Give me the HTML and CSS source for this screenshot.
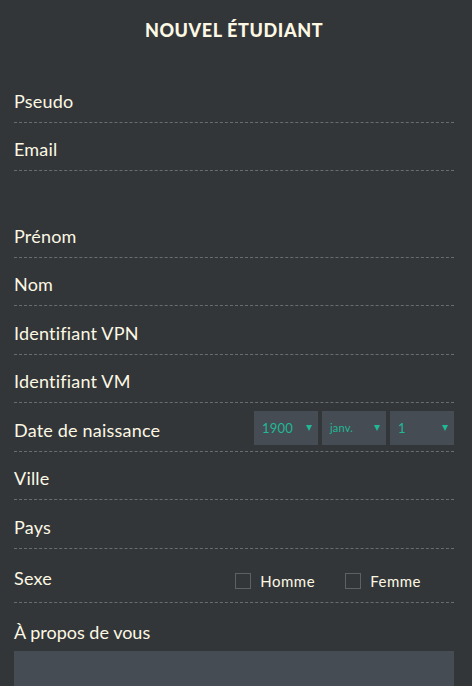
FILE: index.html
```html
<!DOCTYPE html>
<html lang="fr">
<head>
  <meta charset="UTF-8" />
  <title>Nouvel étudiant</title>
  <link rel="stylesheet" href="styles.css">
</head>
<body>
  <div class="form">
    <h1>Nouvel étudiant</h1>

    <div class="row">Pseudo</div>
    <div class="row">Email</div>

    <div class="spacer"></div>

    <div class="row">Prénom</div>
    <div class="row">Nom</div>
    <div class="row">Identifiant VPN</div>
    <div class="row">Identifiant VM</div>
    <div class="row">
      <span>Date de naissance</span>
      <div class="selects">
        <div class="select">1900<span class="arrow"></span></div>
        <div class="select small">janv.<span class="arrow"></span></div>
        <div class="select">1<span class="arrow"></span></div>
      </div>
    </div>
    <div class="row">Ville</div>
    <div class="row">Pays</div>
    <div class="row sexe">
      <span>Sexe</span>
      <div class="checks">
        <label class="check"><span class="box"></span>Homme</label>
        <label class="check"><span class="box"></span>Femme</label>
      </div>
    </div>

    <div class="about">À propos de vous</div>
    <div class="textarea"></div>
  </div>
</body>
</html>
```

FILE: styles.css
```css
body {
  margin: 0;
  background: #323639;
  font-family: Lato, "Open Sans", sans-serif;
  color: #fdf8e4;
}

.form {
  padding: 0 18px 0 14px;
}

h1 {
  margin: 0;
  padding-top: 20px;
  height: 74px;
  box-sizing: border-box;
  font-size: 18px;
  line-height: 20px;
  font-weight: 900;
  text-transform: uppercase;
  text-align: center;
  letter-spacing: 0.6px;
}

.row {
  display: flex;
  align-items: center;
  justify-content: space-between;
  height: 41.5px;
  padding-top: 6px;
  border-bottom: 1px dashed #686d71;
  font-size: 18px;
  letter-spacing: 0.2px;
}

.spacer {
  height: 38px;
}

.selects {
  display: flex;
  gap: 4px;
  margin-top: -3px;
}

.select {
  position: relative;
  width: 64px;
  height: 34px;
  padding-left: 8px;
  box-sizing: border-box;
  background: #464c53;
  color: #1fb996;
  font-size: 13px;
  line-height: 34px;
}

.select.small {
  font-size: 11px;
}

.arrow {
  position: absolute;
  right: 6px;
  top: 14px;
  border-left: 3.5px solid transparent;
  border-right: 3.5px solid transparent;
  border-top: 6px solid #1fb996;
}

.sexe {
  height: 47.5px;
}

.checks {
  display: flex;
  gap: 30px;
  margin-right: 33px;
  margin-top: 6px;
}

.check {
  display: flex;
  align-items: center;
  font-size: 15px;
  letter-spacing: 0.5px;
}

.box {
  width: 14px;
  height: 14px;
  border: 1px solid #5c6165;
  margin-right: 9px;
}

.about {
  height: 48px;
  line-height: 58px;
  font-size: 18px;
}

.textarea {
  height: 60px;
  background: #464c53;
}
```
